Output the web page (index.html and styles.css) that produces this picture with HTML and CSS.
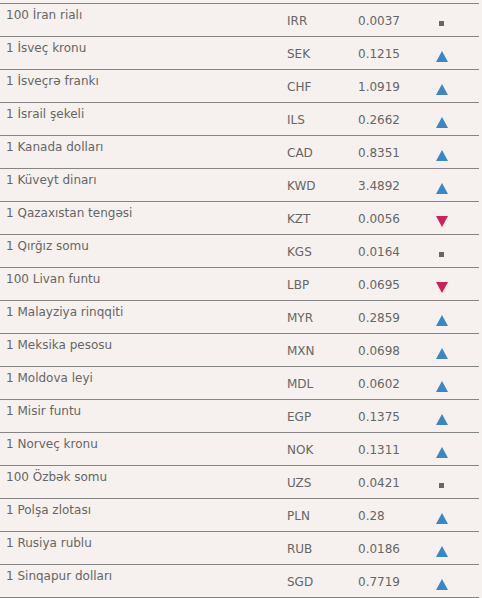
FILE: index.html
```html
<!DOCTYPE html>
<html lang="az">
<head>
<meta charset="utf-8">
<link rel="stylesheet" href="styles.css">
</head>
<body>
<div class="rates">
  <div class="row edge"></div>
  <div class="row"><span class="name">100 İran rialı</span><span class="code">IRR</span><span class="val">0.0037</span><span class="ic same"></span></div>
  <div class="row"><span class="name">1 İsveç kronu</span><span class="code">SEK</span><span class="val">0.1215</span><span class="ic up"></span></div>
  <div class="row"><span class="name">1 İsveçrə frankı</span><span class="code">CHF</span><span class="val">1.0919</span><span class="ic up"></span></div>
  <div class="row"><span class="name">1 İsrail şekeli</span><span class="code">ILS</span><span class="val">0.2662</span><span class="ic up"></span></div>
  <div class="row"><span class="name">1 Kanada dolları</span><span class="code">CAD</span><span class="val">0.8351</span><span class="ic up"></span></div>
  <div class="row"><span class="name">1 Küveyt dinarı</span><span class="code">KWD</span><span class="val">3.4892</span><span class="ic up"></span></div>
  <div class="row"><span class="name">1 Qazaxıstan tengəsi</span><span class="code">KZT</span><span class="val">0.0056</span><span class="ic down"></span></div>
  <div class="row"><span class="name">1 Qırğız somu</span><span class="code">KGS</span><span class="val">0.0164</span><span class="ic same"></span></div>
  <div class="row"><span class="name">100 Livan funtu</span><span class="code">LBP</span><span class="val">0.0695</span><span class="ic down"></span></div>
  <div class="row"><span class="name">1 Malayziya rinqqiti</span><span class="code">MYR</span><span class="val">0.2859</span><span class="ic up"></span></div>
  <div class="row"><span class="name">1 Meksika pesosu</span><span class="code">MXN</span><span class="val">0.0698</span><span class="ic up"></span></div>
  <div class="row"><span class="name">1 Moldova leyi</span><span class="code">MDL</span><span class="val">0.0602</span><span class="ic up"></span></div>
  <div class="row"><span class="name">1 Misir funtu</span><span class="code">EGP</span><span class="val">0.1375</span><span class="ic up"></span></div>
  <div class="row"><span class="name">1 Norveç kronu</span><span class="code">NOK</span><span class="val">0.1311</span><span class="ic up"></span></div>
  <div class="row"><span class="name">100 Özbək somu</span><span class="code">UZS</span><span class="val">0.0421</span><span class="ic same"></span></div>
  <div class="row"><span class="name">1 Polşa zlotası</span><span class="code">PLN</span><span class="val">0.28</span><span class="ic up"></span></div>
  <div class="row"><span class="name">1 Rusiya rublu</span><span class="code">RUB</span><span class="val">0.0186</span><span class="ic up"></span></div>
  <div class="row"><span class="name">1 Sinqapur dolları</span><span class="code">SGD</span><span class="val">0.7719</span><span class="ic up"></span></div>
</div>
</body>
</html>
```
FILE: styles.css
```css
html, body {
  margin: 0;
  padding: 0;
  background: #f6f1ee;
}
.rates {
  width: 479px;
  font-family: "DejaVu Sans", Verdana, sans-serif;
  font-size: 12px;
  color: #666;
}
.row {
  display: grid;
  grid-template-columns: 287px 71px 75px 1fr;
  height: 32px;
  border-bottom: 1px solid #858585;
}
.row.edge {
  height: 3px;
}
.name {
  padding-left: 6px;
  padding-top: 4px;
  line-height: 14px;
  align-self: start;
}
.code, .val {
  align-self: center;
  line-height: 14px;
  padding-top: 1px;
}
.ic {
  align-self: start;
  justify-self: start;
  margin-left: 3px;
}
.up {
  margin-top: 14px;
  width: 0;
  height: 0;
  border-left: 6.5px solid transparent;
  border-right: 6.5px solid transparent;
  border-bottom: 11px solid #3b87c4;
}
.down {
  margin-top: 14px;
  width: 0;
  height: 0;
  border-left: 6.5px solid transparent;
  border-right: 6.5px solid transparent;
  border-top: 11px solid #cf1f5d;
}
.same {
  margin-top: 17px;
  margin-left: 6px;
  width: 5px;
  height: 5px;
  background: #666;
}
```
